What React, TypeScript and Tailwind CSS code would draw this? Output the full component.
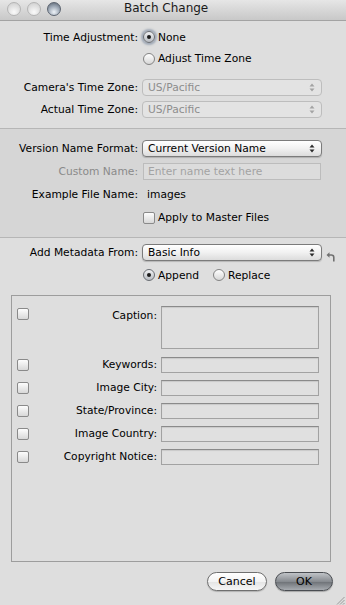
import React from 'react';

function Arrows({ disabled }: { disabled?: boolean }) {
  const c = disabled ? '#a3a3a3' : '#2b2b2b';
  return (
    <svg width="6" height="9" viewBox="0 0 6 9">
      <path d="M3 0.5 L5.5 3.5 L0.5 3.5 Z" fill={c} />
      <path d="M3 8.5 L5.5 5.5 L0.5 5.5 Z" fill={c} />
    </svg>
  );
}

function Popup({ text, disabled }: { text: string; disabled?: boolean }) {
  return (
    <div
      className={
        disabled
          ? 'flex h-[17px] w-[180px] items-center justify-between rounded-[4px] border border-[#bdbdbd] bg-[#e3e3e3] pl-[5px] pr-[6px] text-[#8d8d8d]'
          : 'flex h-[17px] w-[180px] items-center justify-between rounded-[4px] border border-[#7b7b7b] bg-gradient-to-b from-[#ffffff] via-[#f1f1f1] to-[#dcdcdc] pl-[5px] pr-[6px] text-black shadow-[0_1px_1px_rgba(0,0,0,0.18)]'
      }
    >
      <span>{text}</span>
      <Arrows disabled={disabled} />
    </div>
  );
}

function Radio({ checked, focus }: { checked?: boolean; focus?: boolean }) {
  return (
    <span
      className={
        'flex h-[12px] w-[12px] shrink-0 items-center justify-center rounded-full border ' +
        (checked
          ? 'border-[#6a6e74] bg-gradient-to-b from-[#f0f1f3] to-[#b9bdc3]'
          : 'border-[#838383] bg-gradient-to-b from-[#ffffff] to-[#d6d6d6]') +
        (focus ? ' shadow-[0_0_2px_2px_rgba(112,128,152,0.55)]' : '')
      }
    >
      {checked && <span className="h-[4px] w-[4px] rounded-full bg-[#1c1c1c]" />}
    </span>
  );
}

function Check() {
  return (
    <span className="block h-[12px] w-[12px] shrink-0 rounded-[2px] border border-[#8a8a8a] bg-gradient-to-b from-[#fdfdfd] to-[#d8d8d8]" />
  );
}

function Field({ h = 'h-[16px]' }: { h?: string }) {
  return (
    <div
      className={
        h +
        ' w-[158px] shrink-0 border border-[#a2a2a2] border-t-[#8a8a8a] bg-[#e0e0e0] shadow-[inset_0_1px_1px_rgba(0,0,0,0.1)]'
      }
    />
  );
}

const META = ['Keywords:', 'Image City:', 'State/Province:', 'Image Country:', 'Copyright Notice:'];

export default function App() {
  return (
    <div className="flex h-[605px] w-[346px] flex-col overflow-hidden bg-[#dedede] font-['DejaVu_Sans',sans-serif] text-[10.7px] leading-[13px] text-black">
      {/* title bar */}
      <div className="flex h-[21px] shrink-0 items-center border-b border-[#a3a3a3] bg-gradient-to-b from-[#e6e6e6] to-[#c8c8c8] pb-[3px] pl-[7px]">
        <div className="flex shrink-0 gap-[6px]">
          <span className="block h-[14px] w-[14px] shrink-0 rounded-full border border-[#b4b4b4] bg-[radial-gradient(circle_at_50%_75%,#fafafa,#e0e0e0_55%,#cbcbcb)]" />
          <span className="block h-[14px] w-[14px] shrink-0 rounded-full border border-[#b4b4b4] bg-[radial-gradient(circle_at_50%_75%,#fafafa,#e0e0e0_55%,#cbcbcb)]" />
          <span className="block h-[14px] w-[14px] shrink-0 rounded-full border border-[#5c6470] bg-[radial-gradient(circle_at_50%_75%,#eef3f8,#9aa5b3_55%,#56606c)]" />
        </div>
        <span className="ml-[63px] text-[12px] text-[#1a1a1a]">Batch Change</span>
      </div>

      {/* time zone */}
      <div className="flex shrink-0 flex-col border-b border-[#b6b6b6] pb-[8px] pt-[5px]">
        <div className="flex h-[22px] items-center">
          <span className="w-[139px] pr-[1px] text-right">Time Adjustment:</span>
          <span className="ml-[4px] flex items-center gap-[3px]">
            <Radio checked focus />
            None
          </span>
        </div>
        <div className="flex h-[21px] items-center pl-[143px]">
          <span className="flex items-center gap-[3px]">
            <Radio />
            Adjust Time Zone
          </span>
        </div>
        <div className="mt-[7px] flex h-[22px] items-center">
          <span className="w-[139px] pr-[1px] text-right">Camera's Time Zone:</span>
          <span className="ml-[3px]">
            <Popup text="US/Pacific" disabled />
          </span>
        </div>
        <div className="flex h-[22px] items-center">
          <span className="w-[139px] pr-[1px] text-right">Actual Time Zone:</span>
          <span className="ml-[3px]">
            <Popup text="US/Pacific" disabled />
          </span>
        </div>
      </div>

      {/* version name */}
      <div className="flex shrink-0 flex-col border-b border-[#b6b6b6] bg-[#d6d6d6] pb-[8px] pt-[8px]">
        <div className="flex h-[23px] items-center">
          <span className="w-[139px] pr-[1px] text-right">Version Name Format:</span>
          <span className="ml-[3px]">
            <Popup text="Current Version Name" />
          </span>
        </div>
        <div className="flex h-[23px] items-center">
          <span className="w-[139px] pr-[1px] text-right text-[#8a8a8a]">Custom Name:</span>
          <div className="ml-[4px] flex h-[17px] w-[178px] items-center border border-[#bcbcbc] bg-[#dcdcdc] pl-[4px] text-[#a3a3a3]">
            Enter name text here
          </div>
        </div>
        <div className="flex h-[23px] items-center">
          <span className="w-[139px] pr-[1px] text-right">Example File Name:</span>
          <span className="ml-[8px]">images</span>
        </div>
        <div className="flex h-[23px] items-center pl-[143px]">
          <span className="flex items-center gap-[3px]">
            <Check />
            Apply to Master Files
          </span>
        </div>
      </div>

      {/* metadata */}
      <div className="flex flex-1 flex-col pt-[3px]">
        <div className="flex h-[23px] items-center">
          <span className="w-[139px] pr-[1px] text-right">Add Metadata From:</span>
          <span className="ml-[3px]">
            <Popup text="Basic Info" />
          </span>
          <svg className="ml-[4px] mt-[8px]" width="9" height="10" viewBox="0 0 9 10">
            <path d="M0.5 3 L3.5 0.3 L3.5 5.7 Z" fill="#707070" />
            <path d="M3 3 H5.5 Q7.8 3 7.8 5.5 V9.5" stroke="#707070" strokeWidth="1.6" fill="none" />
          </svg>
        </div>
        <div className="flex h-[22px] items-center pl-[143px]">
          <span className="flex items-center gap-[3px]">
            <Radio checked />
            Append
          </span>
          <span className="ml-[14px] flex items-center gap-[3px]">
            <Radio />
            Replace
          </span>
        </div>

        <div className="ml-[11px] mt-[9px] flex h-[267px] w-[320px] flex-col border border-[#9d9d9d] pt-[10px]">
          <div className="flex items-start pl-[5px]">
            <div className="mt-[2px]">
              <Check />
            </div>
            <span className="mt-[3px] flex-1 pr-[4px] text-right">Caption:</span>
            <Field h="h-[43px]" />
            <span className="w-[11px] shrink-0" />
          </div>
          <div className="mt-[4px] flex flex-col">
            {META.map((m) => (
              <div key={m} className="flex h-[23px] items-center pl-[5px]">
                <Check />
                <span className="flex-1 pr-[4px] text-right">{m}</span>
                <Field />
                <span className="w-[11px] shrink-0" />
              </div>
            ))}
          </div>
        </div>

        <div className="mt-[10px] flex h-[19px] items-center justify-end gap-[8px] pr-[13px]">
          <button className="flex h-[19px] w-[60px] items-center justify-center rounded-full border border-[#6f6f6f] bg-[linear-gradient(to_bottom,#ffffff,#f3f3f3_50%,#e4e4e4_51%,#f6f6f6)] text-[11px] text-black shadow-[0_1px_1px_rgba(0,0,0,0.2)]">
            Cancel
          </button>
          <button className="flex h-[19px] w-[58px] items-center justify-center rounded-full border border-[#4a4d52] bg-[linear-gradient(to_bottom,#c0c3c7,#878b90_50%,#6c7075_51%,#a7abb0)] text-[11px] text-black shadow-[0_1px_1px_rgba(0,0,0,0.25)]">
            OK
          </button>
        </div>
        <div className="mt-[5px] flex justify-end pr-[1px]">
          <svg width="9" height="9" viewBox="0 0 9 9">
            <path d="M8.5 1 L1 8.5 M8.5 4 L4 8.5 M8.5 7 L7 8.5" stroke="#9a9a9a" strokeWidth="1" />
          </svg>
        </div>
      </div>
    </div>
  );
}
